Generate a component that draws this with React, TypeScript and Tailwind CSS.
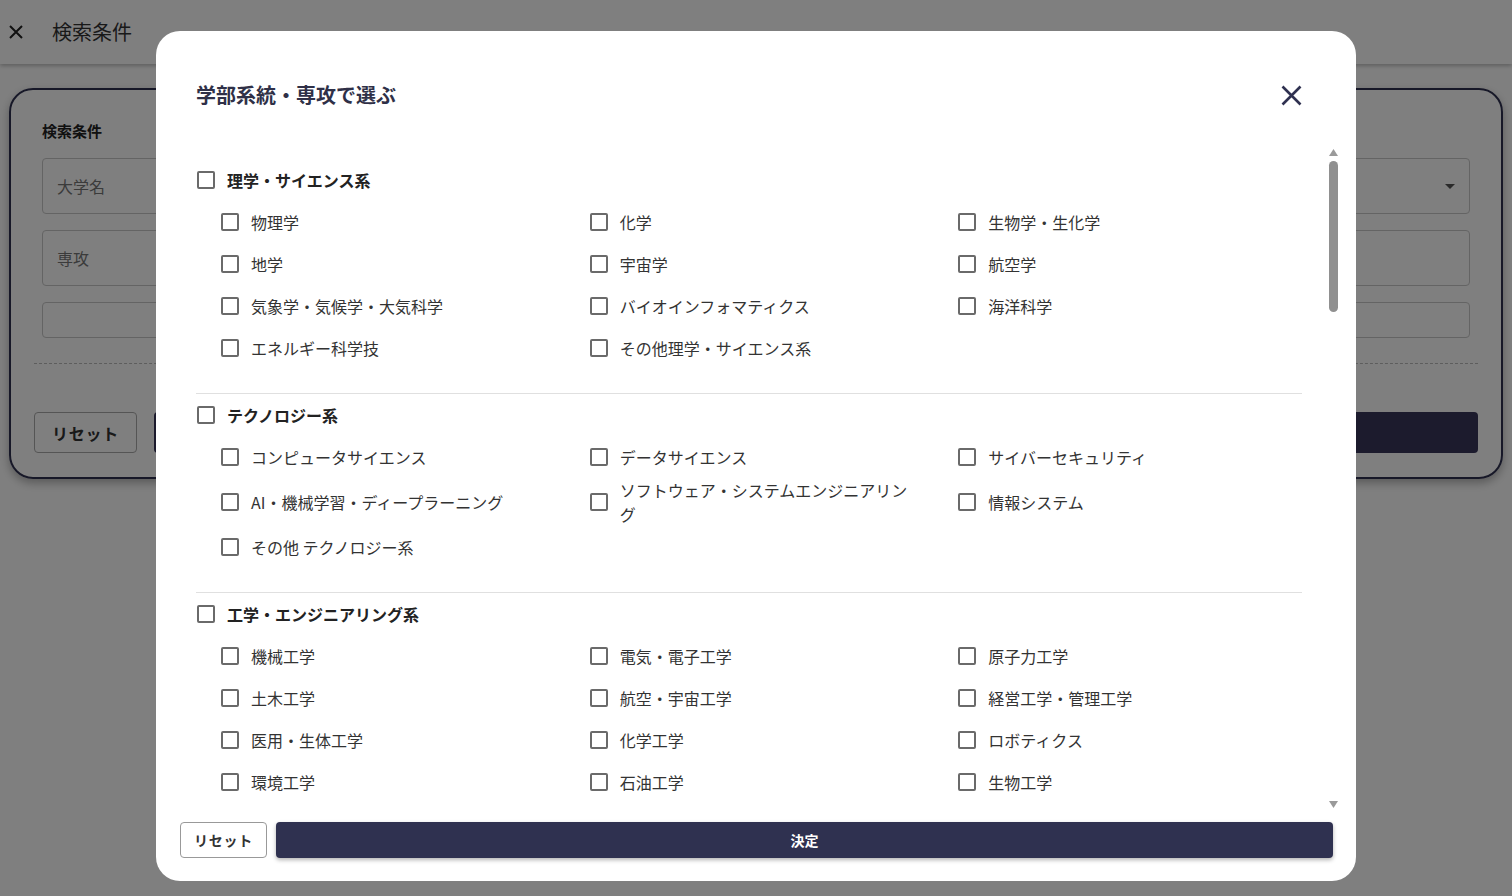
import React from "react";

const sections: { title: string; items: string[] }[] = [
  {
    title: "理学・サイエンス系",
    items: [
      "物理学",
      "化学",
      "生物学・生化学",
      "地学",
      "宇宙学",
      "航空学",
      "気象学・気候学・大気科学",
      "バイオインフォマティクス",
      "海洋科学",
      "エネルギー科学技",
      "その他理学・サイエンス系",
    ],
  },
  {
    title: "テクノロジー系",
    items: [
      "コンピュータサイエンス",
      "データサイエンス",
      "サイバーセキュリティ",
      "AI・機械学習・ディープラーニング",
      "ソフトウェア・システムエンジニアリング",
      "情報システム",
      "その他 テクノロジー系",
    ],
  },
  {
    title: "工学・エンジニアリング系",
    items: [
      "機械工学",
      "電気・電子工学",
      "原子力工学",
      "土木工学",
      "航空・宇宙工学",
      "経営工学・管理工学",
      "医用・生体工学",
      "化学工学",
      "ロボティクス",
      "環境工学",
      "石油工学",
      "生物工学",
      "材料工学",
      "建築学",
      "その他工学・エンジニアリング系",
    ],
  },
  {
    title: "医学・健康系",
    items: ["医学", "看護学", "薬学", "歯学", "公衆衛生学", "栄養学"],
  },
];

function Box() {
  return <span className="block w-[18px] h-[18px] shrink-0 rounded-[2px] border-2 border-[#6a6a6a]" />;
}

function Item({ label }: { label: string }) {
  return (
    <div className="flex items-center min-h-[42px] pl-[25px] pr-4">
      <Box />
      <span className="ml-3 text-[16px] leading-6 text-[#333]">{label}</span>
    </div>
  );
}

function Section({ title, items }: { title: string; items: string[] }) {
  return (
    <div className="pb-6 border-b border-[#e0e0e0]">
      <div className="flex items-center h-[42px] pl-px">
        <Box />
        <span className="ml-3 text-[16px] font-bold text-[#222]">{title}</span>
      </div>
      <div className="grid grid-cols-3">
        {items.map((it) => (
          <Item key={it} label={it} />
        ))}
      </div>
    </div>
  );
}

function Field({ label, h = "h-[56px]", select = false }: { label?: string; h?: string; select?: boolean }) {
  return (
    <div className={`flex items-center justify-between ${h} rounded-[4px] border border-[#c8c8c8] px-[14px]`}>
      <span className="text-[16px] text-[#777]">{label}</span>
      {select && (
        <svg width="10" height="5" viewBox="0 0 10 5">
          <path d="M0 0 L10 0 L5 5 Z" fill="#555" />
        </svg>
      )}
    </div>
  );
}

export default function App() {
  return (
    <div className="relative w-full h-[896px] overflow-hidden bg-white font-['Noto_Sans_CJK_JP',_sans-serif]">
      {/* Background page */}
      <div className="flex items-center h-[64px] bg-white shadow-[0_2px_4px_rgba(0,0,0,0.25)]">
        <svg className="ml-[9px]" width="14" height="14" viewBox="0 0 14 14">
          <path d="M1 1 L13 13 M13 1 L1 13" stroke="#222" strokeWidth="2" />
        </svg>
        <span className="ml-[29px] text-[20px] text-[#333]">検索条件</span>
      </div>
      <div className="mx-[9px] mt-[24px] h-[391px] rounded-[24px] border-2 border-[#2f3150] px-[23px] pt-[30px] shadow-[0_4px_10px_rgba(0,0,0,0.3)]">
        <div className="px-[8px]">
          <div className="text-[15px] font-bold leading-[22px] text-[#222]">検索条件</div>
          <div className="mt-[16px] grid grid-cols-2 gap-4">
            <Field label="大学名" />
            <Field select />
          </div>
          <div className="mt-[16px]">
            <Field label="専攻" />
          </div>
          <div className="mt-[16px]">
            <Field h="h-[36px]" />
          </div>
        </div>
        <div className="mt-[25px] border-t border-dashed border-[#bbb]" />
        <div className="mt-[48px] flex gap-[17px]">
          <div className="flex h-[41px] w-[103px] items-center justify-center rounded-[4px] border border-[#aaa] text-[16px] font-bold tracking-wider text-[#333]">
            リセット
          </div>
          <div className="h-[41px] flex-1 rounded-[4px] bg-[#38365a]" />
        </div>
      </div>

      {/* Overlay + modal */}
      <div className="absolute inset-0 flex items-start justify-center bg-black/50">
        <div className="mt-[31px] flex h-[850px] w-[1200px] flex-col rounded-[24px] bg-white">
          <div className="flex h-[48px] mt-[40px] items-center justify-between pl-[40px] pr-[54px]">
            <h2 className="text-[20px] font-bold text-[#2f3047]">学部系統・専攻で選ぶ</h2>
            <svg width="21" height="21" viewBox="0 0 21 21">
              <path d="M1.5 1.5 L19.5 19.5 M19.5 1.5 L1.5 19.5" stroke="#2f3150" strokeWidth="2.6" />
            </svg>
          </div>
          <div className="mt-[26px] ml-[40px] mr-[15px] flex h-[667px]">
            <div className="flex-1 overflow-hidden pr-6 pt-[14px]">
              {sections.map((s) => (
                <Section key={s.title} title={s.title} items={s.items} />
              ))}
            </div>
            <div className="flex w-[15px] flex-col">
              <div className="flex h-[15px] items-center justify-center">
                <svg width="9" height="7" viewBox="0 0 9 7">
                  <path d="M4.5 0 L9 7 L0 7 Z" fill="#9a9a9a" />
                </svg>
              </div>
              <div className="flex-1">
                <div className="mx-auto mt-px h-[151px] w-[9px] rounded-full bg-[#909090]" />
              </div>
              <div className="flex h-[15px] items-center justify-center">
                <svg width="9" height="7" viewBox="0 0 9 7">
                  <path d="M0 0 L9 0 L4.5 7 Z" fill="#9a9a9a" />
                </svg>
              </div>
            </div>
          </div>
          <div className="mt-[10px] flex gap-[9px] pl-[24px] pr-[23px]">
            <div className="flex h-[36px] w-[87px] items-center justify-center rounded-[4px] border border-[#999] text-[14px] font-bold tracking-wider text-[#333]">
              リセット
            </div>
            <div className="flex h-[36px] flex-1 items-center justify-center rounded-[4px] bg-[#2f3150] text-[14px] font-bold text-white shadow-[0_2px_4px_rgba(0,0,0,0.3)]">
              決定
            </div>
          </div>
        </div>
      </div>
    </div>
  );
}
